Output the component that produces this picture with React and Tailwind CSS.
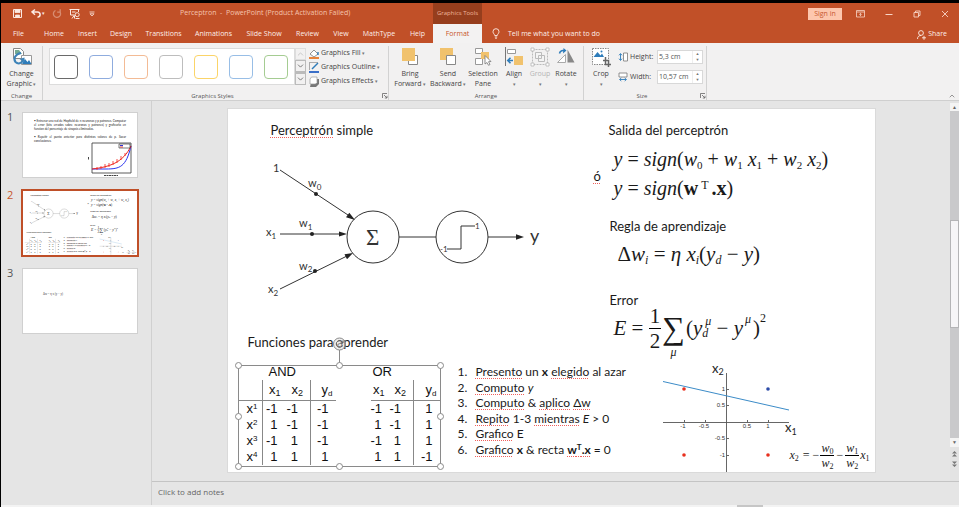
import React from "react";
import { ChevronDown, ChevronUp } from "lucide-react";

const UI = "font-['Open_Sans','Noto_Sans',sans-serif]";
const CALIBRI = "font-[Lato,'Open_Sans',sans-serif]";
const SERIF = "font-['Liberation_Serif',serif]";

/* ---------- title bar ---------- */

function QuickAccess() {
  return (
    <div className="flex items-center text-[#fbe9e1]">
      <button aria-label="Save" className="ml-[11px] w-[11px]">
        <svg viewBox="0 0 11 11" className="size-[11px]" fill="none" stroke="currentColor">
          <path d="M1.5 1.5h8v8h-8z" />
          <path d="M3 1.5v3h5v-3M3.5 9.500v-2.500h4v2.500" fill="currentColor" strokeWidth=".8" />
        </svg>
      </button>
      <button aria-label="Undo" className="ml-2 w-[10px]">
        <svg viewBox="0 0 10 11" className="h-[11px] w-[10px]" fill="none" stroke="currentColor" strokeWidth="1.500">
          <path d="M4 1.500L1 4l3 2.700M1 4h5.500C10 4.200 10 9 6.500 9.200" />
        </svg>
      </button>
      <span className="ml-px text-[5px]">▾</span>
      <button aria-label="Repeat" className="ml-[7px] w-[10px] opacity-40">
        <svg viewBox="0 0 10 11" className="h-[11px] w-[10px]" fill="none" stroke="currentColor" strokeWidth="1.300">
          <path d="M7.500 3.200A3.600 3.600 0 1 1 3.500 2.500M5.200 4.200h3v-3" />
        </svg>
      </button>
      <button aria-label="Start from beginning" className="ml-[7px] w-[12px]">
        <svg viewBox="0 0 12 12" className="size-[12px]" fill="none" stroke="currentColor">
          <path d="M.5 1.500h10M1.500 1.500v5.500h4M9.500 1.500V4M3 4h3.500M5.500 7L3 10.500M5.500 8v2.500" />
          <circle cx="8.200" cy="6.700" r="2" />
          <path d="M6.500 10.500h4" />
        </svg>
      </button>
      <svg viewBox="0 0 6 6" className="ml-[8px] size-[6px]" fill="none" stroke="currentColor" strokeWidth=".8">
        <path d="M.5 1h5M1 2.800h4L3 5z" />
      </svg>
    </div>
  );
}

function TitleBar() {
  return (
    <div className="flex h-[21px] items-center">
      <div className="flex w-[432px] items-center">
        <QuickAccess />
        <span className="ml-[85px] whitespace-pre text-[7px] text-[#f5c4ae]">
          Perceptron{"  -  "}PowerPoint (Product Activation Failed)
        </span>
      </div>
      <div className="flex h-full w-[49px] items-center justify-center whitespace-nowrap bg-[#963e1d] text-[6px] text-[#f0b69c]">
        Graphics Tools
      </div>
      <div className="ml-auto flex items-center text-[#f8d5c6]">
        <button className="h-[12px] w-[34px] bg-[#fdc7ae] text-[7px] leading-[12px] text-[#c8592f]">Sign in</button>
        <button aria-label="Ribbon display options" className="ml-[14px]">
          <svg viewBox="0 0 9 8" className="h-[8px] w-[9px]" fill="none" stroke="currentColor">
            <path d="M.5.5h8v6.500h-8zM.5 2h8M4.500 6V3.500M3.200 4.700l1.300-1.300 1.300 1.300" strokeWidth=".8" />
          </svg>
        </button>
        <button aria-label="Minimize" className="ml-[20px]">
          <svg viewBox="0 0 8 8" className="size-[8px]" stroke="currentColor"><path d="M.5 4.500h7" /></svg>
        </button>
        <button aria-label="Restore" className="ml-[20px]">
          <svg viewBox="0 0 8 8" className="size-[8px]" fill="none" stroke="currentColor" strokeWidth=".9">
            <path d="M1 2.500h4.500V7H1zM2.500 2.500V1H7v4.500H5.500" />
          </svg>
        </button>
        <button aria-label="Close" className="mr-[10px] ml-[20px]">
          <svg viewBox="0 0 8 8" className="size-[8px]" stroke="currentColor" strokeWidth=".9"><path d="M1 1l6 6M7 1L1 7" /></svg>
        </button>
      </div>
    </div>
  );
}

const tabs = [
  ["File", "w-[35px]"],
  ["Home", "w-[36px]"],
  ["Insert", "w-[31px]"],
  ["Design", "w-[36px]"],
  ["Transitions", "w-[49px]"],
  ["Animations", "w-[51px]"],
  ["Slide Show", "w-[50px]"],
  ["Review", "w-[37px]"],
  ["View", "w-[30px]"],
  ["MathType", "w-[46px]"],
  ["Help", "w-[31px]"],
];

function TabRow() {
  return (
    <nav className="flex h-[19px] items-center text-[7px] font-medium text-[#fdeee8]">
      {tabs.map(([name, width]) => (
        <button key={name} className={`${width} whitespace-nowrap pt-[2px] text-center`}>{name}</button>
      ))}
      <button className="h-full w-[49px] bg-[#f3f2f2] pt-[2px] text-[#c8552b]">Format</button>
      <svg viewBox="0 0 8 11" className="ml-[10px] h-[11px] w-[8px]" fill="none" stroke="currentColor" strokeWidth=".9">
        <path d="M2.700 7.500C2.500 6 1 5.500 1 3.700a3 3 0 0 1 6 0C7 5.500 5.500 6 5.300 7.500zM2.800 9h2.400M3.200 10.300h1.600" />
      </svg>
      <button className="ml-[8px] whitespace-nowrap pt-[2px]">Tell me what you want to do</button>
      <button className="mr-[12px] ml-auto flex items-center gap-[2px] pt-[2px]">
        <svg viewBox="0 0 9 10" className="h-[10px] w-[9px]" fill="none" stroke="currentColor" strokeWidth=".9">
          <circle cx="4" cy="3" r="2.400" />
          <path d="M.5 9c0-2.500 1.500-3.500 3.500-3.500M5 7.800h4M7 5.800v4" />
        </svg>
        Share
      </button>
    </nav>
  );
}

/* ---------- ribbon ---------- */

function Caret() {
  return <span className="text-[5px] leading-none text-[#777]"> ▾</span>;
}

function Launcher() {
  return (
    <svg viewBox="0 0 6 6" className="size-[6px]" fill="none" stroke="#666" strokeWidth=".8">
      <path d="M.5 5V.5H5M2 2l3 3M5 2.800V5H2.800" />
    </svg>
  );
}

function Group({ label, width, launcher, children }) {
  return (
    <section className={`${width} flex shrink-0 flex-col border-r border-[#d2d2d2]`}>
      <div className="flex h-[46px]">{children}</div>
      <div className="flex h-[8px] items-center text-[6px] leading-[8px] text-[#555]">
        <span className="flex-1 text-center">{label}</span>
        {launcher && <Launcher />}
      </div>
    </section>
  );
}

function BigButton({ icon, lines, caret, width, dim }) {
  return (
    <button className={`${width} flex shrink-0 flex-col items-center pt-px text-[7px] leading-[10px] whitespace-nowrap ${dim ? "text-[#b5b5b5]" : "text-[#444]"}`}>
      <svg viewBox="0 0 20 20" className="mb-[2px] size-[20px]" fill="none">{icon}</svg>
      <span>{lines[0]}</span>
      <span>{lines[1]}{caret && <Caret />}</span>
    </button>
  );
}

const icons = {
  change: (
    <>
      <path d="M1.500 1.500h7l3 3v7h-10z" fill="#fff" stroke="#888" />
      <path d="M3 3h4l3 4H3z" fill="#74aa92" />
      <path d="M9.500 8.500h10v9h-10z" fill="#fff" stroke="#999" />
      <path d="M10 17l3-5 2.500 3 1.500-2 2.500 4z" fill="#2e7cba" />
      <path d="M9 6C3 7 1 12 3.500 15c2.500 2.500 6 1.500 7.500-1.500" stroke="#3d83b8" strokeWidth="2" />
      <path d="M7.500 12l5-1.500v5z" fill="#3d83b8" />
    </>
  ),
  forward: (
    <>
      <path d="M8.500 8.500h9v9h-9z" fill="#fff" stroke="#888" />
      <path d="M2 1h13v13H2z" fill="#f1c26d" />
    </>
  ),
  backward: (
    <>
      <path d="M2 1h13v12H2z" fill="#f1c26d" />
      <path d="M8.500 8.500h9v9h-9z" fill="#fff" stroke="#888" />
    </>
  ),
  selection: (
    <>
      <path d="M2.500 1.500h7v5h-7zM2.500 11.500h7v6h-7z" fill="#fff" stroke="#999" />
      <path d="M8 5h8v7H8z" fill="#f1c26d" />
      <path d="M12 8.500l6 6-2.500.2 1.500 2.800-1.500.8-1.500-2.800-2 1.500z" fill="#fff" stroke="#777" strokeWidth=".8" />
    </>
  ),
  align: (
    <>
      <path d="M1.500 0v19" stroke="#777" />
      <path d="M3.500 2.500h8v4h-8z" fill="#fff" stroke="#999" />
      <path d="M10 9h9v9h-9z" fill="#f1c26d" />
      <path d="M9 13.500H4M6.500 10.800L3.800 13.500l2.700 2.700" stroke="#2e7cba" strokeWidth="1.600" />
    </>
  ),
  group: (
    <>
      <path d="M2.500 2.500h15v15h-15z" stroke="#bbb" strokeDasharray="2 1" />
      <path d="M5.500 5.500h6v6h-6zM8.500 8.500h6v6h-6z" fill="#f4f4f4" stroke="#bbb" />
      <path d="M1 1h3v3H1zM16 1h3v3h-3zM1 16h3v3H1zM16 16h3v3h-3z" fill="#fff" stroke="#b5b5b5" strokeWidth=".8" />
    </>
  ),
  rotate: (
    <>
      <path d="M1.500 15.500l8-8v8z" fill="#fff" stroke="#aaa" />
      <path d="M11.500 2.500v13h7z" fill="#888" />
      <path d="M3.500 6.500c.5-3 3.500-3.500 5.500-2.500" stroke="#2e7cba" strokeWidth="1.600" />
      <path d="M7 6.500l3.500-3L7.500 1z" fill="#2e7cba" />
    </>
  ),
  crop: (
    <>
      <path d="M1.500 1.500h16v16h-16z" fill="#fff" stroke="#888" strokeDasharray="1.500 1" />
      <path d="M2.500 10l4-5 3 3.500 1.500-2 2 3.500z" fill="#2e7cba" />
      <circle cx="10.500" cy="4.500" r="1" fill="#2e7cba" />
      <path d="M14.500 10v7.500H20M12 13.500h5.500V20" stroke="#666" strokeWidth="1.500" />
    </>
  ),
};

const swatches = [
  "border-[#6a6a6a]",
  "border-[#8facde]",
  "border-[#f3bb95]",
  "border-[#bdbdbd]",
  "border-[#fbd468]",
  "border-[#98bee6]",
  "border-[#a5cc92]",
];

function Gallery() {
  return (
    <div className="mt-[2px] ml-[6px] flex h-[37px]">
      <div className="flex w-[246px] items-center gap-[11px] border border-[#dcdcdc] bg-white pl-[4px]">
        {swatches.map((color, i) => (
          <button key={color} aria-label={`Style ${i + 1}`} className={`${color} size-[24px] rounded-[4px] border`} />
        ))}
      </div>
      <div className="flex w-[11px] flex-col">
        <button aria-label="Previous styles" className="flex flex-1 items-center justify-center border border-[#ddd] text-[#bbb]"><ChevronUp size={10} strokeWidth={2} /></button>
        <button aria-label="Next styles" className="flex flex-1 items-center justify-center border border-[#bbb] text-[#555]"><ChevronDown size={10} strokeWidth={2} /></button>
        <button aria-label="More styles" className="flex flex-1 items-center justify-center border border-t-2 border-[#bbb] text-[#555]"><ChevronDown size={10} strokeWidth={2} /></button>
      </div>
    </div>
  );
}

function StyleCommands() {
  const rows = [
    ["Graphics Fill", <><path d="M1 6l4-4 4 4-4 3z" fill="#fff" stroke="#777" strokeWidth=".8" /><path d="M9 4v3" stroke="#2e7cba" strokeWidth="1.400" /><path d="M0 9h10v2H0z" fill="#e8833a" /></>],
    ["Graphics Outline", <><path d="M1 .500h8M.5 0v8" stroke="#999" strokeWidth=".8" /><path d="M9 1L3 7" stroke="#2e7cba" strokeWidth="1.500" /><path d="M0 9h10v2H0z" fill="#3a6fc8" /></>],
    ["Graphics Effects", <><path d="M3 3h7v5l-3 3H1z" fill="#777" /><path d="M2.500 1h5.500v5.500L6.500 8H1V3z" fill="#fff" stroke="#999" strokeWidth=".7" /></>],
  ];
  return (
    <div className="ml-[3px] flex flex-col">
      {rows.map(([label, icon]) => (
        <button key={label} className="flex h-[14px] items-center gap-[2px] pt-px text-[7px] whitespace-nowrap text-[#444]">
          <svg viewBox="0 0 10 11" className="h-[11px] w-[10px]" fill="none">{icon}</svg>
          <span>{label}<Caret /></span>
        </button>
      ))}
    </div>
  );
}

function SizeField({ id, label, value, icon }) {
  return (
    <div className="flex h-[20px] items-center">
      <svg viewBox="0 0 10 10" className="mr-[2px] size-[10px]" fill="none">{icon}</svg>
      <label htmlFor={id} className="w-[27px] text-[7px] text-[#444]">{label}</label>
      <div className="flex h-[14px] w-[46px] border border-[#d8d8d8] bg-white">
        <input id={id} defaultValue={value} className="w-[34px] pl-px text-[7px] text-[#555] outline-none" />
        <div className="flex w-[10px] flex-col border-l border-[#eee] text-[4px] leading-[6px] text-[#777]">
          <button aria-label={`Increase ${label}`}>▲</button>
          <button aria-label={`Decrease ${label}`}>▼</button>
        </div>
      </div>
    </div>
  );
}

function Ribbon() {
  return (
    <div className="flex h-[58px] border-b border-[#cfcfcf] bg-[#f2f1f1] pt-[3px]">
      <Group label="Change" width="w-[42px]">
        <BigButton width="w-[41px]" icon={icons.change} lines={["Change", "Graphic"]} caret />
      </Group>
      <Group label="Graphics Styles" width="w-[346px]" launcher>
        <Gallery />
        <StyleCommands />
      </Group>
      <Group label="Arrange" width="w-[195px]">
        <BigButton width="w-[42px]" icon={icons.forward} lines={["Bring", "Forward"]} caret />
        <BigButton width="w-[34px]" icon={icons.backward} lines={["Send", "Backward"]} caret />
        <BigButton width="w-[36px]" icon={icons.selection} lines={["Selection", "Pane"]} />
        <BigButton width="w-[26px]" icon={icons.align} lines={["Align", ""]} caret />
        <BigButton width="w-[26px]" icon={icons.group} lines={["Group", ""]} caret dim />
        <BigButton width="w-[26px]" icon={icons.rotate} lines={["Rotate", ""]} caret />
      </Group>
      <Group label="Size" width="w-[123px]" launcher>
        <BigButton width="w-[34px]" icon={icons.crop} lines={["Crop", ""]} caret />
        <div className="flex flex-col pt-px">
          <SizeField id="height" label="Height:" value="5,3 cm" icon={<><path d="M5.500 1h4v8h-4z" fill="#fff" stroke="#777" strokeWidth=".8" /><path d="M2.500 2v6M1 3.300L2.500 1.500 4 3.300M1 6.700l1.500 1.800L4 6.700" stroke="#2e7cba" strokeWidth=".9" /></>} />
          <SizeField id="width" label="Width:" value="10,57 cm" icon={<><path d="M1 1h8v4H1z" fill="#fff" stroke="#777" strokeWidth=".8" /><path d="M2 7.500h6M3.300 6L1.500 7.500 3.300 9M6.700 6l1.800 1.500L6.700 9" stroke="#2e7cba" strokeWidth=".9" /></>} />
        </div>
      </Group>
      <button aria-label="Collapse ribbon" className="mr-[3px] ml-auto self-end text-[#666]"><ChevronUp size={8} /></button>
    </div>
  );
}

/* ---------- slide ---------- */

function Spell({ children }) {
  return <span className="underline decoration-[#f0605c] decoration-dotted decoration-1 underline-offset-2 [text-decoration-skip-ink:none]">{children}</span>;
}

function Sub({ children }) {
  return <sub className="text-[11px] not-italic">{children}</sub>;
}

function PerceptronDiagram() {
  return (
    <svg viewBox="0 0 290 150" className="absolute top-[46px] left-[32px] h-[150px] w-[290px] font-[Lato,sans-serif]" fill="none" stroke="#333">
      <path d="M20 15l68 45M20 79h60M20 134l67-33M139 82h37M228 82h29" />
      <g fill="#222" stroke="none">
        <path d="M95 65l-9-2.700 3.300-4.600zM87 79l-8 2.500v-5zM93 98l-6 6.300-2.500-5zM264 82l-8 2.800v-5.600z" />
        <circle cx="56" cy="39" r="2" />
        <circle cx="52" cy="79" r="2" />
        <circle cx="55" cy="116" r="2" />
      </g>
      <circle cx="113" cy="82" r="26" />
      <circle cx="202" cy="82" r="26" />
      <path d="M187 94h14V71h14" />
      <g fill="#333" stroke="none" fontSize="11">
        <text x="13" y="17">1</text>
        <text x="48" y="32">w<tspan dy="3" fontSize="8">0</tspan></text>
        <text x="39" y="72">w<tspan dy="3" fontSize="8">1</tspan></text>
        <text x="39" y="115">w<tspan dy="2" fontSize="8">2</tspan></text>
        <text x="6" y="81">x<tspan dy="3" fontSize="8">1</tspan></text>
        <text x="8" y="138">x<tspan dy="3" fontSize="8">2</tspan></text>
        <text x="270" y="87" fontSize="18">y</text>
        <text x="215" y="74" fontSize="8">1</text>
        <text x="180" y="97" fontSize="8">-1</text>
        <text x="106" y="90" fontSize="23" fontFamily="Liberation Serif, serif">Σ</text>
      </g>
    </svg>
  );
}

function DecisionPlot() {
  return (
    <svg viewBox="0 0 145 114" className="absolute top-[250px] left-[430px] h-[114px] w-[145px] font-[Lato,sans-serif]" fill="none" stroke="#555">
      <path d="M68.500 14v99M5 63.500h126M26.500 61v2M47.500 61v2M89.500 61v2M110.500 61v2M69 30.500h2M69 46.500h2M69 79.500h2M69 96.500h2" strokeWidth=".9" />
      <path d="M5 22.500L131 51" stroke="#3c8cc8" />
      <g fill="#e8301e" stroke="none">
        <circle cx="26" cy="30" r="1.800" />
        <circle cx="26" cy="96" r="1.800" />
        <circle cx="110" cy="96" r="1.800" />
        <circle cx="110" cy="30" r="1.800" fill="#2c4ba8" />
      </g>
      <g fill="#333" stroke="none" fontSize="6" textAnchor="middle" fontFamily="Liberation Sans, sans-serif">
        <text x="25" y="69">-1</text>
        <text x="46" y="69">-0.5</text>
        <text x="89" y="69">0.5</text>
        <text x="110" y="69">1</text>
      </g>
      <g fill="#333" stroke="none" fontSize="6" textAnchor="end" fontFamily="Liberation Sans, sans-serif">
        <text x="67" y="32">1</text>
        <text x="67" y="48">0.5</text>
        <text x="67" y="81">-0.5</text>
        <text x="67" y="98">-1</text>
      </g>
      <g fill="#222" stroke="none" fontSize="13">
        <text x="54" y="14">x<tspan dy="2" fontSize="9">2</tspan></text>
        <text x="127" y="73">x<tspan dy="3" fontSize="9">1</tspan></text>
      </g>
    </svg>
  );
}

function TruthTable({ place, heading, labelled, rows, widths }) {
  const sub = "text-[9px]";
  return (
    <table className={`${place} absolute table-fixed border-collapse font-['Liberation_Sans',sans-serif] text-[13px] leading-[16px] text-[#111]`}>
      <caption className="h-[16px] text-left leading-[16px]"><span className={labelled ? "pl-[31px]" : "pl-[2px]"}>{heading}</span></caption>
      <colgroup>{widths.map((w, i) => <col key={i} className={w} />)}</colgroup>
      <thead>
        <tr className="h-[20px] border-b border-[#888] align-middle">
          {labelled && <th className="border-r border-[#888]" />}
          <th className="pr-[4px] text-right font-normal">x<sub className={sub}>1</sub></th>
          <th className="border-r border-[#888] pr-[7px] text-right font-normal">x<sub className={sub}>2</sub></th>
          <th className="pr-[3px] text-right font-normal">y<sub className="text-[8px]">d</sub></th>
        </tr>
      </thead>
      <tbody>
        {rows.map((r, i) => (
          <tr key={i} className="h-[16px]">
            {labelled && <th className="border-r border-[#888] pl-[9px] text-left font-normal">x<sup className="text-[8px]">{i + 1}</sup></th>}
            <td className="pr-[7px] text-right">{r[0]}</td>
            <td className="border-r border-[#888] pr-[12px] text-right">{r[1]}</td>
            <td className="pr-[7px] text-right">{r[2]}</td>
          </tr>
        ))}
      </tbody>
    </table>
  );
}

function Frac({ top, bottom, pad = "px-px" }) {
  return (
    <span className="flex flex-col items-center">
      <span className={`border-b border-black ${pad}`}>{top}</span>
      <span>{bottom}</span>
    </span>
  );
}

function Steps() {
  const steps = [
    <><Spell>Presento</Spell> un <b>x</b> <Spell>elegido</Spell> al azar</>,
    <><Spell>Computo</Spell> <i>y</i></>,
    <><Spell>Computo</Spell> &amp; <Spell>aplico</Spell> <Spell>Δw</Spell></>,
    <><Spell>Repito</Spell> 1-3 <Spell>mientras</Spell> <i>E</i> &gt; 0</>,
    <><Spell>Grafico</Spell> E</>,
    <><Spell>Grafico</Spell> <b>x</b> &amp; recta <b><Spell>w<sup className="text-[8px]">T</sup>.x</Spell></b> = 0</>,
  ];
  return (
    <ol className={`absolute top-[255px] left-[230px] flex h-[93px] flex-col justify-between whitespace-nowrap text-[12px] leading-[16px] ${CALIBRI}`}>
      {steps.map((step, i) => (
        <li key={i} className="flex h-[15px]"><span className="w-[18px]">{i + 1}.</span><span>{step}</span></li>
      ))}
    </ol>
  );
}

function SlideContent() {
  const box = `absolute whitespace-nowrap text-[13px] leading-[18px] ${CALIBRI}`;
  const formula = `absolute flex items-center whitespace-pre leading-[24px] italic ${SERIF}`;
  const plain = "not-italic";
  const small = "text-[8px] not-italic";
  return (
    <div className="relative h-[363px] w-[647px] overflow-hidden bg-white text-left text-[#1a1a1a]">
      <p className={`${box} top-[12px] left-[43px]`}><Spell>Perceptrón</Spell> simple</p>
      <PerceptronDiagram />

      <p className={`${box} top-[12px] left-[381px]`}>Salida del perceptrón</p>
      <p className={`${box} top-[58px] left-[366px]`}><Spell>ó</Spell></p>
      <p className={`${formula} top-[38px] left-[386px] text-[20px]`}>
        <span>y <i className={plain}>=</i> sign<i className={plain}>(</i>w<Sub>0</Sub> <i className={plain}>+</i> w<Sub>1</Sub> x<Sub>1</Sub> <i className={plain}>+</i> w<Sub>2</Sub> x<Sub>2</Sub><i className={plain}>)</i></span>
      </p>
      <p className={`${formula} top-[67px] left-[386px] text-[20px]`}>
        <span>y <i className={plain}>=</i> sign<i className={plain}>(</i><b className={plain}>w</b><sup className="px-[3px] text-[12px] not-italic">T</sup><b className={plain}>.x</b><i className={plain}>)</i></span>
      </p>

      <p className={`${box} top-[108px] left-[382px]`}>Regla de aprendizaje</p>
      <p className={`${formula} top-[133px] left-[390px] text-[21px]`}>
        <span><i className={plain}>Δ</i>w<sub className="text-[12px]">i</sub> <i className={plain}>=</i> η x<sub className="text-[12px]">i</sub><i className={plain}>(</i>y<sub className="text-[12px]">d</sub> <i className={plain}>−</i> y<i className={plain}>)</i></span>
      </p>

      <p className={`${box} top-[182px] left-[382px]`}>Error</p>
      <div className={`${formula} top-[190px] left-[386px] h-[58px] text-[21px]`}>
        <span>E <i className={plain}>=</i> </span>
        <span className={plain}><Frac top="1" bottom="2" pad="px-px" /></span>
        <span className="flex flex-col items-center px-px pt-[11px] not-italic">
          <span className="text-[32px] leading-[36px]">∑</span>
          <span className="text-[12px] leading-[12px] italic">μ</span>
        </span>
        <span className={plain}>(</span>
        <span>y</span>
        <span className="flex flex-col pb-[2px] text-[12px] leading-[12px]"><span className="pl-[3px]">μ</span><span>d</span></span>
        <span> <i className={plain}>−</i> y</span>
        <sup className="px-[2px] pb-[6px] text-[12px]">μ</sup>
        <span className={plain}>)</span>
        <sup className="pb-[8px] text-[12px] not-italic">2</sup>
      </div>

      <p className={`${box} top-[224px] left-[20px]`}>Funciones para aprender</p>
      <TruthTable place="top-[255px] left-[10px] w-[98px]" heading="AND" labelled widths={["w-[25px]", "w-[22px]", "w-[26px]", "w-[25px]"]} rows={[["-1", "-1", "-1"], ["1", "-1", "-1"], ["-1", "1", "-1"], ["1", "1", "1"]]} />
      <TruthTable place="top-[255px] left-[143px] w-[69px]" heading="OR" widths={["w-[18px]", "w-[25px]", "w-[26px]"]} rows={[["-1", "-1", "1"], ["1", "-1", "1"], ["-1", "1", "1"], ["1", "1", "-1"]]} />

      <Steps />

      <DecisionPlot />
      <div className={`absolute top-[331px] left-[562px] flex h-[30px] items-center gap-px text-[12px] leading-[14px] whitespace-nowrap italic ${SERIF}`}>
        <span>x<sub className={small}>2</sub></span>
        <span className="pl-[3px] not-italic">= −</span>
        <Frac top={<>w<sub className={small}>0</sub></>} bottom={<>w<sub className={small}>2</sub></>} />
        <span className="px-px not-italic">−</span>
        <Frac top={<>w<sub className={small}>1</sub></>} bottom={<>w<sub className={small}>2</sub></>} />
        <span>x<sub className={small}>1</sub></span>
      </div>
    </div>
  );
}

function SelectionFrame() {
  const handles = [[10, 256], [111, 256], [212, 256], [10, 307], [212, 307], [10, 357], [111, 357], [212, 357]];
  return (
    <svg viewBox="0 0 224 363" className="pointer-events-none absolute top-0 left-0 h-[363px] w-[224px]" fill="none" stroke="#8a8a8a">
      <path d="M10.500 256.500h202v101h-202zM111.500 241v15" />
      {handles.map(([x, y]) => <circle key={`${x}-${y}`} cx={x + 0.5} cy={y + 0.5} r="3" fill="#fff" />)}
      <circle cx="111.500" cy="235" r="6" fill="#ddd" fillOpacity=".5" />
      <path d="M114.500 233.500a3.300 3.300 0 1 0 0 3M115 231.500v2.500h-2.500" stroke="#555" />
    </svg>
  );
}

/* ---------- thumbnails ---------- */

function HopfieldThumb() {
  return (
    <div className={`relative size-full bg-white px-[11px] pt-[6px] text-left text-[3px] leading-[4px] text-[#222] ${CALIBRI}`}>
      <p className="text-justify">• Entrenar una red de Hopfield de n neuronas y p patrones. Computar el error (bits errados sobre neuronas y patrones) y graficarlo en funcion del porcentaje de sinapsis eliminadas.</p>
      <p className="mt-[4px] text-justify">• Repetir el punto anterior para distintos valores de p. Sacar conclusiones.</p>
      <svg viewBox="0 0 46 36" className="absolute right-[4px] bottom-0 h-[36px] w-[46px]" fill="none">
        <path d="M5 2h39v30H5z" stroke="#333" strokeWidth=".8" />
        <path d="M5 28h14c14 0 20-2 25-23" stroke="#2c35f0" />
        <path d="M5 28C22 26 36 22 44 5" stroke="#f0231c" />
        <path d="M10 26v3M14 25v3M18 23v4M22 22v4M26 20v4M30 18v4M34 15v4M38 12v3" stroke="#f0231c" strokeWidth=".8" />
        <path d="M32 3h11v4H32z" fill="#fff" stroke="#222" strokeWidth=".6" />
        <path d="M33 4.500h3" stroke="#2c35d8" /><path d="M33 6h3" stroke="#e8433c" />
        <path d="M17 34.500h14M1.500 16v3" stroke="#444" strokeDasharray="2 .5" />
      </svg>
    </div>
  );
}

function Thumb({ number, active, children }) {
  return (
    <li className="flex h-[68px] gap-[7px]">
      <span className={`w-[7px] text-[11px] leading-[12px] ${active ? "text-[#c8552b]" : "text-[#555]"}`}>{number}</span>
      <button aria-label={`Slide ${number}`} className={active ? "h-[68px] w-[118px] border-2 border-[#bf4f28]" : "m-[2px] h-[64px] w-[114px] outline outline-[#d0d0d0]"}>
        <div className="h-[64px] w-[114px] overflow-hidden bg-white">{children}</div>
      </button>
    </li>
  );
}

function Thumbnails() {
  return (
    <ol className="flex w-[151px] shrink-0 flex-col gap-[10px] border-r border-[#d0d0d0] pt-[10px] pl-[6px]">
      <Thumb number="1"><HopfieldThumb /></Thumb>
      <Thumb number="2" active>
        <div aria-hidden="true" className="h-[363px] w-[647px] origin-top-left scale-[0.1762]"><SlideContent /></div>
      </Thumb>
      <Thumb number="3">
        <div className={`pt-[23px] pl-[20px] text-left text-[3px] leading-[4px] text-[#333] ${SERIF}`}>Δw = η x (y − y)</div>
      </Thumb>
    </ol>
  );
}

/* ---------- editor ---------- */

function VerticalScroll() {
  return (
    <div className="flex w-[9px] shrink-0 flex-col items-center bg-[#e3e3e3] text-[5px] text-[#666]">
      <button aria-label="Scroll up" className="mt-[2px] h-[8px] w-full bg-[#f4f4f4] leading-[8px]">▲</button>
      <div className="flex w-full flex-1 flex-col bg-[#c9c9cb] pt-[109px]">
        <div className="h-[108px] border border-[#b4b4b6] bg-[#f6f5f7]" />
      </div>
      <button aria-label="Scroll down" className="h-[9px] w-full bg-[#f4f4f4] leading-[9px]">▼</button>
      <button aria-label="Previous slide" className="mt-[2px] flex h-[10px] items-center"><svg viewBox="0 0 5 6" className="h-[6px] w-[5px]" fill="#777"><path d="M0 2.500L2.500 0 5 2.500zM0 5.500L2.500 3 5 5.500z" /></svg></button>
      <button aria-label="Next slide" className="mb-[12px] flex h-[10px] items-center"><svg viewBox="0 0 5 6" className="h-[6px] w-[5px]" fill="#777"><path d="M0 .500h5L2.500 3zM0 3.500h5L2.500 6z" /></svg></button>
    </div>
  );
}

export default function App() {
  return (
    <div className={`flex min-h-screen flex-col border-t-[3px] border-l border-black bg-[#e5e5e5] ${UI}`}>
      <header>
        <div className="bg-[#c15028]">
          <TitleBar />
          <TabRow />
        </div>
        <Ribbon />
      </header>
      <main className="flex flex-1">
        <Thumbnails />
        <div className="flex min-w-0 flex-1 flex-col">
          <div className="flex flex-1">
            <div className="flex flex-1 justify-center pt-[8px]">
              <div className="relative h-[363px] w-[647px] shrink-0 outline outline-[#dadada]">
                <SlideContent />
                <SelectionFrame />
              </div>
            </div>
            <VerticalScroll />
          </div>
          <div className="flex h-[24px] items-center border-t border-[#c4c4c4] pl-[6px]">
            <input aria-label="Notes" placeholder="Click to add notes" className="w-full pb-[4px] text-[8px] outline-none placeholder:text-[#666]" />
          </div>
        </div>
      </main>
      <footer className="flex h-[2px] bg-[#f3f3f3] pl-[736px]"><span className="w-[26px] bg-[#c6c6c6]" /></footer>
    </div>
  );
}
